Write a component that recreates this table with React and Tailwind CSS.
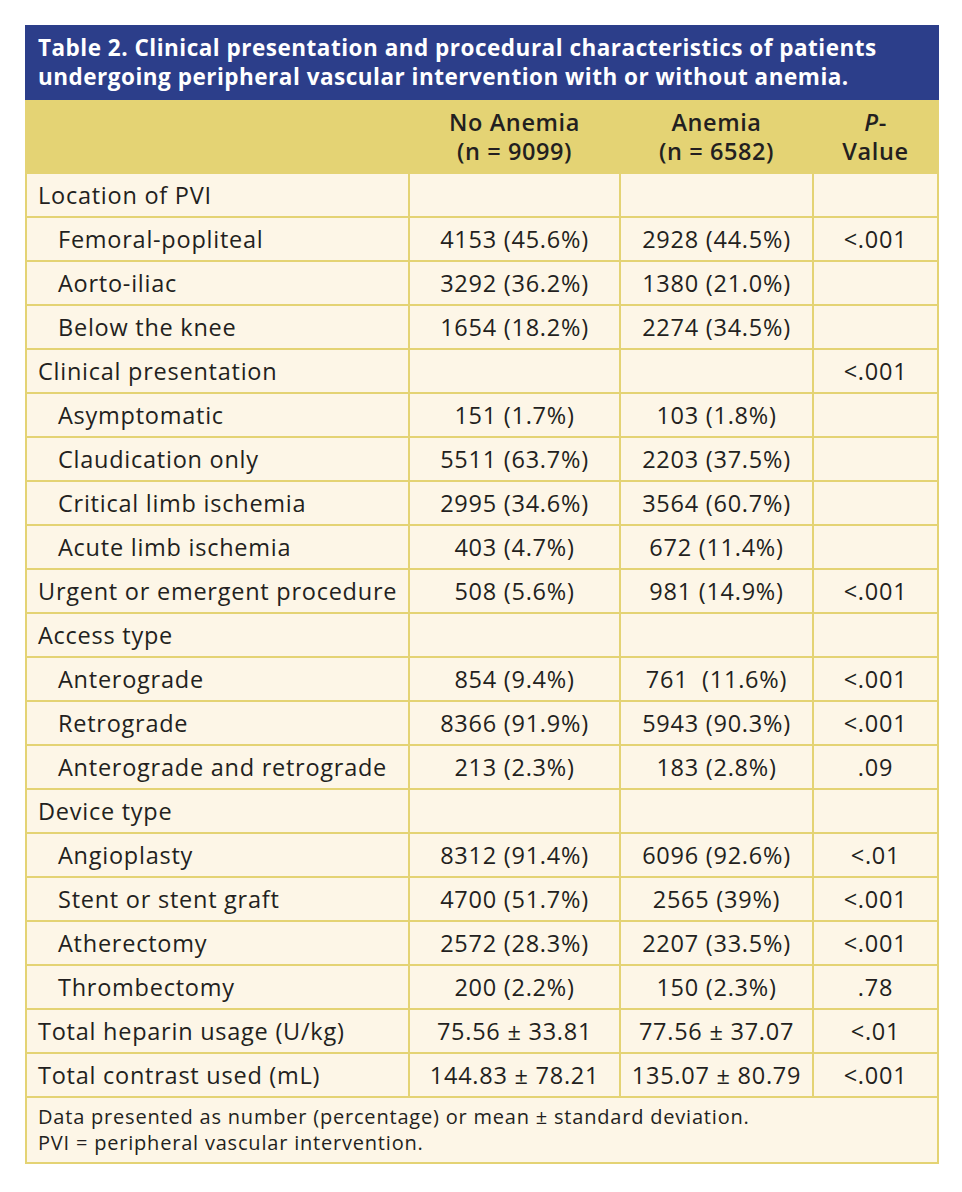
import React from "react";

const rows = [
  { label: "Location of PVI", a: "", b: "", p: "" },
  { label: "Femoral-popliteal", ind: true, a: "4153 (45.6%)", b: "2928 (44.5%)", p: "<.001" },
  { label: "Aorto-iliac", ind: true, a: "3292 (36.2%)", b: "1380 (21.0%)", p: "" },
  { label: "Below the knee", ind: true, a: "1654 (18.2%)", b: "2274 (34.5%)", p: "" },
  { label: "Clinical presentation", a: "", b: "", p: "<.001" },
  { label: "Asymptomatic", ind: true, a: "151 (1.7%)", b: "103 (1.8%)", p: "" },
  { label: "Claudication only", ind: true, a: "5511 (63.7%)", b: "2203 (37.5%)", p: "" },
  { label: "Critical limb ischemia", ind: true, a: "2995 (34.6%)", b: "3564 (60.7%)", p: "" },
  { label: "Acute limb ischemia", ind: true, a: "403 (4.7%)", b: "672 (11.4%)", p: "" },
  { label: "Urgent or emergent procedure", a: "508 (5.6%)", b: "981 (14.9%)", p: "<.001" },
  { label: "Access type", a: "", b: "", p: "" },
  { label: "Anterograde", ind: true, a: "854 (9.4%)", b: "761  (11.6%)", p: "<.001" },
  { label: "Retrograde", ind: true, a: "8366 (91.9%)", b: "5943 (90.3%)", p: "<.001" },
  { label: "Anterograde and retrograde", ind: true, a: "213 (2.3%)", b: "183 (2.8%)", p: ".09" },
  { label: "Device type", a: "", b: "", p: "" },
  { label: "Angioplasty", ind: true, a: "8312 (91.4%)", b: "6096 (92.6%)", p: "<.01" },
  { label: "Stent or stent graft", ind: true, a: "4700 (51.7%)", b: "2565 (39%)", p: "<.001" },
  { label: "Atherectomy", ind: true, a: "2572 (28.3%)", b: "2207 (33.5%)", p: "<.001" },
  { label: "Thrombectomy", ind: true, a: "200 (2.2%)", b: "150 (2.3%)", p: ".78" },
  { label: "Total heparin usage (U/kg)", a: "75.56 ± 33.81", b: "77.56 ± 37.07", p: "<.01" },
  { label: "Total contrast used (mL)", a: "144.83 ± 78.21", b: "135.07 ± 80.79", p: "<.001" },
];

export default function App() {
  return (
    <div
      className="min-h-[1192px] w-[962px] bg-white pt-[25px] pl-[25px] text-[#231f20]"
      style={{ fontFamily: '"Open Sans", "Noto Sans", sans-serif' }}
    >
      <div className="w-[914px]">
        <div className="bg-[#2c3e8a] px-[13px] pt-[8px] pb-[9px] text-[22.5px] leading-[29px] font-bold tracking-[0.5px] whitespace-nowrap text-white">
          Table 2. Clinical presentation and procedural characteristics of patients
          <br />
          undergoing peripheral vascular intervention with or without anemia.
        </div>
        <div className="border-x-2 border-b-2 border-[#e4d374] bg-[#fdf6e7]">
          <div className="flex h-[74px] items-center bg-[#e4d374] text-[23.5px] leading-[29px] font-semibold tracking-[0.6px]">
            <div className="w-[381px]" />
            <div className="w-[211px] pl-[2px] text-center">
              No Anemia
              <br />
              (n = 9099)
            </div>
            <div className="w-[193px] pl-[2px] text-center">
              Anemia
              <br />
              (n = 6582)
            </div>
            <div className="w-[125px] pl-[2px] text-center">
              <span className="italic">P</span>-
              <br />
              Value
            </div>
          </div>
          {rows.map((r, i) => (
            <div
              key={i}
              className="flex h-[44px] border-b-2 border-[#e4d374] text-[23.5px] leading-[42px] tracking-[0.75px]"
            >
              <div
                className={
                  r.ind
                    ? "w-[381px] pl-[31px] whitespace-nowrap"
                    : "w-[381px] pl-[11px] whitespace-nowrap"
                }
              >
                {r.label}
              </div>
              <div className="w-[211px] border-l-2 border-[#e4d374] text-center whitespace-pre">
                {r.a}
              </div>
              <div className="w-[193px] border-l-2 border-[#e4d374] text-center whitespace-pre">
                {r.b}
              </div>
              <div className="w-[125px] border-l-2 border-[#e4d374] text-center whitespace-pre">
                {r.p}
              </div>
            </div>
          ))}
          <div className="h-[64px] px-[11px] pt-[6px] text-[20px] leading-[26px] tracking-[0.8px]">
            Data presented as number (percentage) or mean ± standard deviation.
            <br />
            PVI = peripheral vascular intervention.
          </div>
        </div>
      </div>
    </div>
  );
}
